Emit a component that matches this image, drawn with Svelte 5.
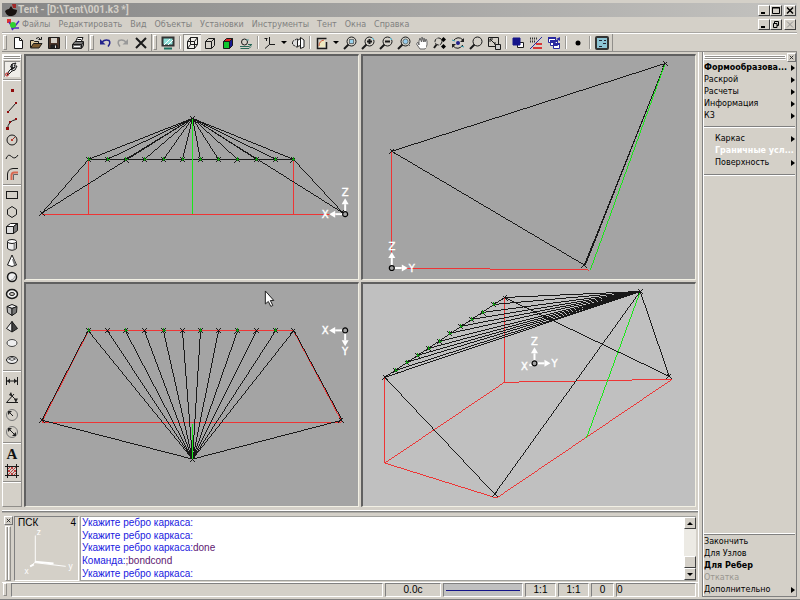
<script>
  const menus = ['Файлы', 'Редактировать', 'Вид', 'Объекты', 'Установки', 'Инструменты', 'Тент', 'Окна', 'Справка'];

  const lens = '<path d="M6.5 9.5L2 14" stroke-width="2"/><circle cx="9.5" cy="6.5" r="4.5"/>';

  // 16x16 icon bodies, drawn with a 1px black stroke by default
  const icons = {
    new: '<path d="M4.500 2.500H9.500L12.500 5.500V13.500H4.500Z" fill="#fff"/><path d="M9.500 2.500V5.500H12.500"/>',
    open: '<path d="M2.500 12.500V5.500H5.500L6.500 6.500H10.500V8.500" fill="#ddc9a0"/><path d="M2.500 13L5.500 8.500H14L11 13Z" fill="#7a5a30"/><path d="M8 3.500Q11 1 12.500 4.500M10.500 4.500H13.500V2"/>',
    save: '<path d="M2.500 2.500H13.500V13.500H2.500Z" fill="#4a3428"/><path d="M5 3H11V8H5Z" fill="#d4d0c8" stroke="none"/><path d="M5 10H11V13H5Z" fill="#222"/><path d="M9.500 10.500V13" stroke="#ddd"/>',
    print: '<path d="M5.500 7L7.500 2.500H13L11 7" fill="#fff"/><path d="M2.500 9.500L5 6.500H13.500V10.500L11.500 13.500H2.500Z" fill="#777"/><path d="M2.500 9.500H11.500V13M11.500 9.500L13.500 7M7.500 4.500H11" /><path d="M4 11.500H10" stroke="#fff"/>',
    undo: '<path d="M5 7Q8 4 12 5.500Q14 8 11 11.500" stroke="#22228c" stroke-width="1.500"/><path d="M3 4V9.500H8.500Z" fill="#22228c" stroke="none"/>',
    redo: '<path d="M11 7Q8 4 4 5.500Q2 8 5 11.500" stroke="#999" stroke-width="1.500"/><path d="M13 4V9.500H7.500Z" fill="#999" stroke="none"/>',
    del: '<path d="M3 3L13 13M13 3L3 13" stroke-width="2"/>',
    screen: '<path d="M2.500 2.500H13.500V10.500H2.500Z" fill="#8fe0d8" stroke-width="2" stroke="#333"/><path d="M4 10L10 4M8 10L13 5" stroke="#fff"/><path d="M4 13.500H12" stroke="#187060" stroke-width="2"/>',
    wire: '<path d="M3.500 6.500H10.500V13.500H3.500ZM3.500 6.500L6.500 2.500H13.500L10.500 6.500M13.500 2.500V9.500L10.500 13.500M6.500 2.500V9.500H13.500M6.500 9.500L3.500 13.500"/>',
    cube: '<path d="M3.500 6.500H9.500V13.500H3.500Z M3.500 6.500L6.500 3.500H12.500L9.500 6.500M12.500 3.500V10.500L9.500 13.500"/>',
    color: '<path d="M3.500 6.500L6.500 3.500H12.500L9.500 6.500Z" fill="#e02020"/><path d="M3.500 6.500H9.500V13.500H3.500Z" fill="#10c830"/><path d="M12.500 3.500V10.500L9.500 13.500V6.500Z" fill="#181890"/>',
    teapot: '<circle cx="6.500" cy="7" r="3"/><path d="M2 11.500H11L14 9.500H10M2.500 13.500H11L13 11.500" stroke="#286858"/><path d="M8 5H11" stroke="#58a0a0"/>',
    axes: '<path d="M2.500 3.500H5.500M7.500 2V9.500H13M7.500 9.500L3 13.500"/><path d="M4.500 3.500V6" />',
    mirror: '<path d="M2.500 6.500L7.500 3.500V12.500L2.500 9.500Z" fill="#ddd" stroke-dasharray="2 1"/><path d="M7.500 5.500L10.500 3.500V2.500L14 5V12L10.500 13.500V10.500L7.500 11.500Z" fill="#fff"/><path d="M10.500 3V13"/>',
    view: '<path d="M12.500 3.500H3.500V13.500H12.500V7" stroke-width="1.500"/><path d="M5 12V8Q7 5 11 5V12Z" fill="#eee8c0" stroke="none"/><path d="M5 11Q5 6 10 5" stroke="#d06040"/>',
    zoomWin: lens + '<path d="M7.500 4.500H11.500V8.500H7.500Z" fill="#9cd4ee" stroke-dasharray="1 1"/>',
    zoomIn: lens + '<path d="M9.500 4V9M7 6.500H12" stroke-width="2"/><path d="M12 3L14 5" stroke="#4bd"/>',
    zoomOut: lens + '<path d="M7 6.500H12" stroke-width="2"/><path d="M12 3L14 5" stroke="#4bd"/>',
    zoomAll: lens + '<circle cx="9.500" cy="6.500" r="2.500" fill="#9ce" stroke="#677"/><path d="M12 9L14 11" stroke="#666"/>',
    hand: '<path d="M4 7L5 10V6L6 3L7.500 7L8 2L9.500 7L10 3L11 7L12 4L13 6V10L11 14H6L2.500 9Z" fill="#fff" stroke="#666"/><path d="M5 10H12V13H7Z" fill="#fff" stroke="none"/>',
    zoomDyn: '<circle cx="6.500" cy="6.500" r="3.500" stroke-dasharray="4 1"/><path d="M4.500 9.500L2 13" stroke-width="2"/><path d="M11.500 2L14 4.500L11.500 7L9 4.500ZM11.500 9L14 11.500L11.500 14L9 11.500Z" fill="#000" stroke="none"/>',
    orbit: '<path d="M3 6Q8 0 13 5M13 10Q8 16 3 11"/><path d="M14 3V7H10ZM2 13V9H6Z" fill="#222" stroke="none"/><path d="M2 5L5 6M11 11L14 12" stroke="#39a"/><circle cx="8" cy="8" r="2" fill="#22228c" stroke="none"/>',
    zoom: lens,
    fit: '<path d="M2.500 2.500H12.500V11.500H2.500Z"/><path d="M4 4L10 10M4 7V4H7M9 7V10"/><path d="M9.500 9.500H14.500V14.500H9.500Z" fill="#ccc"/>',
    layers: '<path d="M7.500 7.500H13.500V12.500H7.500Z" fill="#fff"/><path d="M3 3H10V10H3Z" fill="#14148a" stroke="#14148a"/>',
    hatching: '<path d="M2 3.500H9M2 6.500H8" stroke-dasharray="1 1" stroke-width="2" stroke="#333"/><path d="M8 8H14V10H8ZM5 12H14V14H5Z" fill="#d83838" stroke="none"/><path d="M2 14L14 2" stroke="#2828a0"/>',
    cascade: '<path d="M2.500 2.500H9.500V7.500H2.500ZM4.500 5.500H11.500V10.500H4.500ZM7.500 8.500H13.500V13.500H7.500Z" fill="#fff" stroke="#2828a0"/><path d="M2 3H10M4 6H12M7 9H14" stroke="#2828a0" stroke-width="2"/><path d="M10 4L14 2V6Z" fill="#2828a0" stroke="none"/>',
    dot: '<circle cx="8" cy="8" r="2.500" fill="#000" stroke="none"/>',
    panel: '<rect x="2" y="2" width="12" height="12" rx="1" fill="#8cc4d4" stroke="#333" stroke-width="2"/><path d="M5 5.500H8M9 8.500H12M5 11.500H8M10 5.500H12" stroke="#223"/>',
    tool: '<path d="M3 14L5 10L8 7L6.500 6L8 3L12 2L10 5H13L11 9L8 10L5 13Z" fill="#eee"/><path d="M8 3V7H10M7 9L11 6" stroke-width="1.500"/><circle cx="3" cy="13.500" r="1.500" stroke="#c02020"/>',
    point: '<rect x="7" y="7" width="3" height="3" fill="#900c0c" stroke="none"/>',
    line: '<path d="M4 13L12 4"/><path d="M3 12H5V14H3ZM11 3H13V5H11Z" fill="#900c0c" stroke="none"/>',
    arc: '<path d="M3.500 13Q4 5 12 3.500"/><path d="M2 11H5V14H2ZM5 5H7V7H5ZM11 2H13V4H11Z" fill="#900c0c" stroke="none"/>',
    circle: '<circle cx="8" cy="8" r="5"/><path d="M8 8L11 5" stroke="#a03020"/><path d="M7 7H9V9H7Z" fill="#c04030" stroke="none"/>',
    curve: '<path d="M2 10Q4 4 7.500 7.500T14 6"/>',
    fillet: '<path d="M3.500 14V8Q4 3 9 2.500H14"/><path d="M7.500 14V9Q8 6.500 10 6.500H14" stroke="#d86850" stroke-width="2"/><path d="M9.500 14V8.500H14" stroke="#666"/>',
    rect: '<rect x="2.500" y="4.500" width="11" height="7"/>',
    hex: '<path d="M8 2.500L12.500 5.500V10.500L8 13.500L3.500 10.500V5.500Z"/>',
    box: '<path d="M2.500 6.500L6.500 3.500H13.500L9.500 6.500Z" fill="#fff"/><path d="M2.500 6.500H9.500V13.500H2.500Z" fill="#ddd"/><path d="M13.500 3.500V10.500L9.500 13.500V6.500Z" fill="#777"/>',
    cylinder: '<path d="M3.500 4.500V11.500Q8 15 12.500 11.500V4.500" fill="#eee"/><ellipse cx="8" cy="4.500" rx="4.500" ry="2" fill="#fff"/><path d="M10.500 7V12" stroke="#888" stroke-width="2"/>',
    cone: '<path d="M8 2L12.500 12Q8 15 3.500 12Z" fill="#fff"/><path d="M9 6L11 12" stroke="#777" stroke-width="2"/>',
    sphere: '<circle cx="8" cy="8" r="4.500" fill="#eee" stroke-width="1.500"/><path d="M7 11Q10 11 11 7" stroke="#999"/>',
    torus: '<ellipse cx="8" cy="8" rx="5.500" ry="4.500" fill="#eee" stroke-width="1.500"/><ellipse cx="8" cy="8" rx="2.500" ry="1.500" fill="#d4d0c8"/>',
    prism: '<path d="M3 4.500L8 2.500L13 4.500L8 6.500Z" fill="#eee"/><path d="M3 4.500L8 6.500V13.500L3.500 10.500Z" fill="#bbb"/><path d="M13 4.500L8 6.500V13.500L12.500 10.500Z" fill="#777"/>',
    pyramid: '<path d="M8 2.500L2.500 9.500L8 13Z" fill="#eee"/><path d="M8 2.500L13.500 9.500L8 13Z" fill="#444"/>',
    ellipsoid: '<ellipse cx="8" cy="8" rx="5" ry="3.500" fill="#eee" stroke="#444"/>',
    ring: '<ellipse cx="8" cy="8" rx="5.500" ry="3.500" fill="#eee"/><path d="M4.500 7Q8 10 11.500 7Q8 4 4.500 7" stroke="#555"/>',
    dimLine: '<path d="M2.500 4V12M13.500 4V12M3 8H13" /><path d="M3 8L6 5.500V10.500ZM13 8L10 5.500V10.500Z" fill="#222" stroke="none"/>',
    dimAngle: '<path d="M14 12.500H2.500L10 4M8 6Q11 8 12 12" /><path d="M7 2L9 7L5 5ZM10 8.500H14L12 12Z" fill="#222" stroke="none"/>',
    dimRadius: '<circle cx="8" cy="8" r="5.500" stroke="#777"/><path d="M5 5L9 9"/><path d="M4 4H8L4 8Z" fill="#222" stroke="none"/>',
    dimDiam: '<circle cx="8" cy="8" r="5.500" stroke="#777"/><path d="M5 5L11 11"/><path d="M4 4H8L4 8ZM12 12H8L12 8Z" fill="#222" stroke="none"/>',
    text: '<text x="8" y="13" text-anchor="middle" font-family="Liberation Serif, serif" font-size="15" font-weight="bold" fill="#111" stroke="none">A</text>',
    hatch: '<path d="M3.500 1V15M12.500 1V15M1 3.500H15M1 12.500H15"/><path d="M4 6L6 4M4 9L9 4M4 12L12 4M7 12L12 7M10 12L12 10M4 7L9 12M7 4L12 9" stroke="#c04040"/>'
  };

  const toolbars = [
    [['new', 'open', 'save'], ['print']],
    [['undo', 'redo', 'del']],
    [
      ['screen'],
      ['wire', 'cube', 'color', 'teapot'],
      ['axes', 'more', 'mirror'],
      ['view', 'more', 'zoomWin', 'zoomIn', 'zoomOut', 'zoomAll', 'hand', 'zoomDyn', 'orbit', 'zoom', 'fit'],
      ['layers', 'hatching', 'cascade'],
      ['dot'],
      ['panel']
    ]
  ];

  const tools = [
    { name: 'mode', items: ['tool'] },
    { name: 'curves', items: ['point', 'line', 'arc', 'circle', 'curve', 'fillet'] },
    { name: 'solids', items: ['rect', 'hex', 'box', 'cylinder', 'cone', 'sphere', 'torus', 'prism', 'pyramid', 'ellipsoid', 'ring'] },
    { name: 'dims', items: ['dimLine', 'dimAngle', 'dimRadius', 'dimDiam'] },
    { name: 'notes', items: ['text', 'hatch'] }
  ];

  const nodesX = [88, 107, 125, 144, 163, 182, 200, 218, 237, 256, 275, 293];
  const skew = nodesX.map((_, i) => [384 + Math.round((i * 120) / 11), 377 - Math.round((i * 80) / 11)]);

  // lines are [x1, y1, x2, y2]; marks are small crosses on the nodes
  const views = [
    {
      name: 'Спереди',
      box: '26 56 332 223',
      red: [[88, 159, 88, 214], [293, 159, 293, 214], [41, 214, 343, 214]],
      black: [
        ...nodesX.map((x) => [192, 118, x, 159]),
        [88, 159, 293, 159], [192, 118, 41, 213], [192, 118, 343, 213], [88, 159, 41, 213], [293, 159, 343, 213]
      ],
      green: [[192, 118, 192, 214]],
      marks: [[192, 118], [41, 213], [342, 212]],
      dots: nodesX.map((x) => [x, 159]),
      origin: [345, 214],
      axes: [['Z', 0, -1], ['X', -1, 0]]
    },
    {
      name: 'Сбоку',
      box: '363 56 332 223',
      red: [[391, 151, 391, 268], [391, 268, 589, 270]],
      black: [[391, 151, 665, 63], [391, 151, 584, 265], [665, 63, 584, 265], [664, 65, 585, 265]],
      green: [[665, 63, 590, 270]],
      marks: [[391, 151], [665, 63], [584, 265]],
      dots: [],
      origin: [391, 268],
      axes: [['Z', 0, -1], ['Y', 1, 0]]
    },
    {
      name: 'Сверху',
      box: '26 284 332 223',
      red: [[88, 330, 293, 330], [88, 330, 41, 422], [293, 330, 342, 422], [41, 422, 341, 422]],
      black: [
        ...nodesX.map((x) => [192, 459, x, 331]),
        [87, 331, 41, 420], [294, 331, 342, 420], [41, 420, 192, 459], [342, 420, 192, 459]
      ],
      green: [[192, 424, 192, 459]],
      marks: [...nodesX.filter((_, i) => i % 2).map((x) => [x, 330]), [41, 420], [341, 420], [192, 459]],
      dots: nodesX.filter((_, i) => i % 2 === 0).map((x) => [x, 330]),
      origin: [345, 330],
      axes: [['X', -1, 0], ['Y', 0, 1]],
      cursor: [265, 291]
    },
    {
      name: 'Аксонометрия',
      box: '363 284 332 223',
      active: true,
      red: [[384, 377, 384, 463], [384, 463, 504, 382], [504, 382, 504, 297], [504, 382, 672, 379], [672, 379, 496, 498], [496, 498, 384, 463]],
      black: [
        ...skew.map(([x, y]) => [640, 291, x, y]),
        [384, 377, 504, 297], [504, 297, 669, 376], [640, 291, 669, 376], [640, 291, 494, 494], [384, 377, 494, 494]
      ],
      green: [[640, 291, 586, 438]],
      marks: [[640, 291], [669, 376], [494, 494], [384, 377], [504, 297]],
      dots: skew.slice(1, -1),
      origin: [534, 363],
      axes: [['Z', 0, -1], ['Y', 1, 0], ['X', -0.5, 0.2]]
    }
  ];

  function arrow(dx, dy) {
    const len = Math.hypot(dx, dy);
    const [ux, uy] = [dx / len, dy / len];
    const k = len < 1 ? 6 : 16;
    const [bx, by] = [ux * (k - 6), uy * (k - 6)];
    return `M${ux * k} ${uy * k}L${bx - uy * 3.5} ${by + ux * 3.5}L${bx + uy * 3.5} ${by - ux * 3.5}Z`;
  }

  const labelPos = { Z: [0, -18], X: [-20, 4], Y: [20, 4] };

  function label(name, dx, dy) {
    if (name === 'Y' && dy) return [0, 25];
    if (name === 'X' && dy) return [-10, 7];
    return labelPos[name];
  }

  const sections = ['Формообразова...', 'Раскрой', 'Расчеты', 'Информация', 'К3'];
  const parts = ['Каркас', 'Граничные усл...', 'Поверхность'];
  const actions = ['Закончить', 'Для Узлов', 'Для Ребер', 'Откатка', 'Дополнительно'];

  const log = [
    ['Укажите ребро каркаса:', ''],
    ['Укажите ребро каркаса:', ''],
    ['Укажите ребро каркаса:', 'done'],
    ['Команда:', ';bondcond'],
    ['Укажите ребро каркаса:', '']
  ];

  let section = 'Формообразова...';
  let part = 'Граничные усл...';
  let action = 'Для Ребер';
  let shading = 'wire';
</script>

<div class="window">
  <header class="title">
    <svg class="app-icon" viewBox="0 0 14 14">
      <path d="M1 8Q3 6 5 6L7 3L9 6L13 7Q13 12 8 13H5Q2 12 1 8Z" fill="#181210" />
      <path d="M8 1H12V5H9Z" fill="#a02828" />
    </svg>
    <h1>Tent - [D:\Tent\001.k3 *]</h1>
    <div class="sysbuttons">
      <button aria-label="Свернуть"><svg viewBox="0 0 10 9"><path d="M2 7H6" stroke-width="2" /></svg></button>
      <button aria-label="Развернуть"><svg viewBox="0 0 10 9"><path d="M1.500 1.500H8.500V7.500H1.500ZM1 2H9" /></svg></button>
      <button class="apart" aria-label="Закрыть"><svg viewBox="0 0 10 9"><path d="M2 1.500L8 7.500M8 1.500L2 7.500" stroke-width="1.500" /></svg></button>
    </div>
  </header>

  <nav class="menu">
    <svg class="doc-icon" viewBox="0 0 14 14">
      <path d="M1 1H5V5H1Z" fill="#e03030" />
      <path d="M3 4L7 10M13 3L6 12M5 10H13" stroke="#5028c0" stroke-width="1.500" />
      <circle cx="7" cy="7" r="3" fill="#30d030" />
    </svg>
    {#each menus as item}
      <button>{item}</button>
    {/each}
    <div class="sysbuttons">
      <button aria-label="Свернуть окно"><svg viewBox="0 0 10 9"><path d="M2 7H6" stroke-width="2" /></svg></button>
      <button aria-label="Восстановить окно"><svg viewBox="0 0 10 9"><path d="M3.500 3V1.500H7.500V5.500H6M2.500 3.500H6V7.500H2.500Z" /></svg></button>
      <button class="apart off" aria-label="Закрыть окно"><svg viewBox="0 0 10 9"><path d="M2 1.500L8 7.500M8 1.500L2 7.500" /></svg></button>
    </div>
  </nav>

  <div class="toolbar">
    {#each toolbars as bar}
      <div class="bar">
        <span class="grip"></span>
        {#each bar as group, i}
          {#if i > 0}<span class="sep"></span>{/if}
          {#each group as id}
            {#if id === 'more'}
              <button class="more" aria-label="Ещё"><span class="tri down"></span></button>
            {:else}
              <button
                class="tool"
                class:pressed={shading === id}
                aria-label={id}
                on:click={() => { if (group.includes('wire')) shading = id; }}
              >
                <svg class="icon" viewBox="0 0 16 16">{@html icons[id]}</svg>
              </button>
            {/if}
          {/each}
        {/each}
      </div>
    {/each}
  </div>

  <div class="body">
    <div class="left">
      <div class="work">
        <aside class="tools">
          <span class="hgrip"></span>
          {#each tools as group}
            <div class="group {group.name}">
              {#each group.items as id}
                <button class="tool" class:pressed={id === 'tool'} aria-label={id}>
                  <svg class="icon" viewBox="0 0 16 16">{@html icons[id]}</svg>
                </button>
              {/each}
            </div>
          {/each}
        </aside>

        <main class="views">
          {#each views as v}
            <section class="view" class:active={v.active} aria-label={v.name}>
              <svg viewBox={v.box}>
                <g transform="translate(.5 .5)" shape-rendering="crispEdges">
                  {#each v.red as [x1, y1, x2, y2]}
                    <line class="red" {x1} {y1} {x2} {y2} />
                  {/each}
                  {#each v.black as [x1, y1, x2, y2]}
                    <line class="black" {x1} {y1} {x2} {y2} />
                  {/each}
                  {#each v.green as [x1, y1, x2, y2]}
                    <line class="green" {x1} {y1} {x2} {y2} />
                  {/each}
                  {#each [...v.marks, ...v.dots] as [x, y]}
                    <path class="black" d="M{x - 2} {y - 2}l5 5M{x + 2} {y - 2}l-5 5" />
                  {/each}
                  {#each v.dots as [x, y]}
                    <path class="node" d="M{x} {y - 2}v4M{x - 1} {y}h3" />
                  {/each}
                </g>
                <g class="axes" transform="translate({v.origin[0] + 0.5} {v.origin[1] + 0.5})">
                  {#each v.axes as [name, dx, dy]}
                    <line x1="0" y1="0" x2={dx * 10} y2={dy * 10} />
                    <path d={arrow(dx, dy)} />
                    <text x={label(name, dx, dy)[0]} y={label(name, dx, dy)[1]}>{name}</text>
                  {/each}
                  <circle r="2.500" />
                </g>
                {#if v.cursor}
                  <path
                    class="cursor"
                    transform="translate({v.cursor[0]} {v.cursor[1]})"
                    d="M.5 0V13L3.500 10.500L6 15.500L8 14.500L5.500 9.500H9Z"
                  />
                {/if}
              </svg>
            </section>
          {/each}
        </main>
      </div>

      <div class="console">
        <div class="handle">
          <button class="close" aria-label="Закрыть панель"><svg viewBox="0 0 8 8"><path d="M2 2L6 6M6 2L2 6" /></svg></button>
          <span class="vgrip"></span>
        </div>
        <div class="ucs">
          <div class="ucs-head"><span>ПСК</span><span>4</span></div>
          <svg viewBox="0 0 62 48">
            <path d="M18.500 8V37M18 37L51 41M18 37L13 41" />
            <path d="M18 36L38 38M13 41L17 39" stroke-width="2" />
            <text x="20" y="7">z</text>
            <text x="7" y="49">x</text>
            <text x="54" y="44">y</text>
          </svg>
        </div>
        <div class="log">
          {#each log as [prompt, reply]}
            <p>{prompt}<span>{reply}</span></p>
          {/each}
        </div>
        <div class="scroll">
          <button aria-label="Вверх"><span class="tri up"></span></button>
          <span class="track"></span>
          <span class="thumb"></span>
          <button aria-label="Вниз"><span class="tri down"></span></button>
        </div>
      </div>

      <footer class="status">
        <span class="grip"></span>
        <span class="cell hint"></span>
        <span class="cell time">0.0с</span>
        <span class="cell pen"><i></i></span>
        <span class="cell scale">1:1</span>
        <span class="cell scale">1:1</span>
        <span class="cell count">0</span>
        <span class="cell last">0</span>
      </footer>
    </div>

    <aside class="side">
      <div class="side-head">
        <span class="hgrip"></span>
        <button class="close" aria-label="Закрыть меню"><svg viewBox="0 0 8 8"><path d="M2 2L6 6M6 2L2 6" /></svg></button>
      </div>
      <div class="list">
        {#each sections as item}
          <button class:bold={item === section} on:click={() => (section = item)}>
            {item}<span class="tri right"></span>
          </button>
        {/each}
      </div>
      <div class="list nested">
        {#each parts as item}
          <button class:chosen={item === part} on:click={() => (part = item)}>
            {item}{#if item !== part}<span class="tri right"></span>{/if}
          </button>
        {/each}
      </div>
      <div class="list actions">
        {#each actions as item}
          <button class:bold={item === action} disabled={item === 'Откатка'} on:click={() => (action = item)}>
            {item}{#if item === 'Дополнительно'}<span class="tri right"></span>{/if}
          </button>
        {/each}
      </div>
    </aside>
  </div>
</div>

<style>
  :global(body) {
    background: #d4d0c8;
  }

  .window {
    display: flex;
    flex-direction: column;
    min-height: 100vh;
    box-sizing: border-box;
    padding: 3px 3px 2px 2px;
    background: #d4d0c8;
    border-bottom: 1px solid #808080;
    font-family: "DejaVu Sans", sans-serif;
    font-size: 8px;
    color: #000;
  }

  button {
    font: inherit;
    color: inherit;
    background: none;
    border: none;
    padding: 0;
    margin: 0;
  }

  svg {
    display: block;
    fill: none;
  }

  .title {
    display: flex;
    align-items: center;
    height: 14px;
    padding: 0 1px 0 2px;
    background: linear-gradient(90deg, #868686, #c4c3c0);
    color: #d4d0c8;
  }

  .app-icon,
  .doc-icon {
    width: 14px;
    height: 14px;
  }

  h1 {
    margin: 0;
    flex: 1;
    font-family: Roboto, sans-serif;
    font-size: 10px;
    line-height: 14px;
    font-weight: bold;
  }

  .sysbuttons {
    display: flex;
    margin-left: auto;
  }

  .sysbuttons button {
    width: 12px;
    height: 11px;
    background: #d4d0c8;
    border: 1px solid;
    border-color: #fff #404040 #404040 #fff;
    box-sizing: border-box;
  }

  .sysbuttons .apart {
    margin-left: 2px;
  }

  .sysbuttons svg {
    width: 10px;
    height: 9px;
    stroke: #000;
  }

  .sysbuttons .off svg {
    stroke: #909090;
  }

  .menu {
    display: flex;
    align-items: center;
    gap: 8px;
    height: 16px;
    padding: 0 1px 0 4px;
    color: #808080;
    border-bottom: 1px solid #a8a6a2;
    box-sizing: border-box;
  }

  .doc-icon {
    margin-right: -6px;
  }

  .toolbar {
    display: flex;
    height: 19px;
    box-sizing: border-box;
    border-top: 1px solid #fff;
    border-bottom: 1px solid #908e8a;
  }

  .bar {
    display: flex;
    align-items: center;
    padding-right: 1px;
    border-right: 1px solid #908e8a;
  }

  .grip {
    width: 4px;
    height: 15px;
    margin: 0 2px 0 1px;
    border: 1px solid;
    border-color: #fff #908e8a #908e8a #fff;
    box-sizing: border-box;
    flex: none;
  }

  .sep {
    width: 1px;
    height: 13px;
    margin: 0 2px;
    background: #9a9894;
    border-right: 1px solid #fff;
  }

  .bar .tool {
    width: 18px;
    height: 17px;
    display: grid;
    place-items: center;
  }

  .icon {
    width: 16px;
    height: 16px;
    stroke: #1a1a1a;
  }

  .tool.pressed {
    background: #efede8;
    box-shadow: inset 1px 1px #908e8a;
  }

  .more {
    width: 10px;
    display: grid;
    place-items: center;
  }

  .tri {
    border: 3px solid transparent;
    flex: none;
  }

  .tri.down {
    border-top-color: #000;
    border-bottom: none;
  }

  .tri.up {
    border-bottom-color: #000;
    border-top: none;
  }

  .tri.right {
    border-left: 4px solid #000;
    border-right: none;
  }

  .body {
    flex: 1;
    display: grid;
    grid-template-columns: 1fr 98px;
  }

  .left {
    display: flex;
    flex-direction: column;
    min-width: 0;
    border-right: 1px solid #fff;
  }

  .work {
    flex: 1;
    display: grid;
    grid-template-columns: 20px 1fr;
    gap: 2px;
    padding: 2px 2px 3px 0;
    border-bottom: 1px solid #fff;
  }

  .tools {
    display: flex;
    flex-direction: column;
    border: 1px solid;
    border-color: #fff #908e8a #908e8a #fff;
    box-sizing: border-box;
  }

  .hgrip {
    height: 4px;
    border: 1px solid;
    border-color: #fff #fff #908e8a #fff;
    box-shadow: 0 1px #fff, inset 0 -1px #fff, inset 0 1px #908e8a;
    box-sizing: border-box;
  }

  .group {
    display: grid;
    grid-auto-rows: 1fr;
    padding: 2px 1px;
    border-bottom: 1px solid #908e8a;
    box-shadow: 0 1px #fff;
  }

  .group .tool {
    display: grid;
    place-items: center;
    height: 100%;
  }

  .mode {
    height: 16px;
  }

  .curves {
    height: 100px;
  }

  .solids {
    height: 181px;
  }

  .dims {
    height: 67px;
  }

  .notes {
    height: 34px;
  }

  .views {
    display: grid;
    grid-template: 1fr 1fr / 1fr 1fr;
    gap: 2px;
  }

  .view {
    position: relative;
    background: #a4a4a4;
    border-style: solid;
    border-width: 2px 1px 1px 2px;
    border-color: #606060 #f2f0e4 #f2f0e4 #606060;
    min-height: 0;
    min-width: 0;
  }

  .view.active {
    background: #c0c0c0;
  }

  .view > svg {
    position: absolute;
    width: 100%;
    height: 100%;
  }

  .red {
    stroke: #ee3434;
  }

  .black {
    stroke: #181818;
  }

  .green {
    stroke: #18e818;
  }

  .node {
    stroke: #10a010;
  }

  .axes line {
    stroke: #fff;
    stroke-width: 2;
  }

  .axes path {
    fill: #fff;
  }

  .axes text {
    fill: #fff;
    font: 10px "DejaVu Sans", sans-serif;
    text-anchor: middle;
    stroke: #fff;
    stroke-width: 0.4;
  }

  .axes circle {
    fill: #a4a4a4;
    stroke: #000;
    stroke-width: 1.2;
  }

  .cursor {
    fill: #fff;
    stroke: #202020;
  }

  .console {
    display: flex;
    height: 71px;
    box-sizing: border-box;
    padding: 4px 2px 1px 1px;
    border-top: 1px solid #808080;
    box-shadow: inset 0 1px #b0aea8;
  }

  .handle {
    display: flex;
    flex-direction: column;
    align-items: center;
    width: 10px;
    gap: 1px;
  }

  .close {
    width: 9px;
    height: 9px;
    border: 1px solid;
    border-color: #fff #707070 #707070 #fff;
    box-sizing: border-box;
    flex: none;
  }

  .close svg {
    width: 7px;
    height: 7px;
    stroke: #202020;
  }

  .vgrip {
    flex: 1;
    width: 6px;
    border: 1px solid;
    border-color: #fff #908e8a #908e8a #fff;
    box-sizing: border-box;
    background: linear-gradient(90deg, #d4d0c8 1px, #908e8a 1px, #908e8a 2px, #fff 2px, #fff 3px, #d4d0c8 3px);
  }

  .ucs {
    width: 65px;
    box-sizing: border-box;
    margin-left: 1px;
    padding: 0 2px 0 3px;
    border: 1px solid;
    border-color: #808080 #fff #fff #808080;
  }

  .ucs-head {
    display: flex;
    justify-content: space-between;
    font: 10px/11px "Liberation Sans", sans-serif;
  }

  .ucs svg {
    width: 100%;
    overflow: visible;
    stroke: #fff;
  }

  .ucs text {
    fill: #fff;
    stroke: none;
    font: 9px "Liberation Sans", sans-serif;
  }

  .log {
    flex: 1;
    display: grid;
    grid-auto-rows: 1fr;
    align-items: center;
    padding-left: 1px;
    margin-left: 1px;
    background: #fff;
    border: 1px solid #a0a09c;
    border-right: none;
    font: 10px/12px "Liberation Sans", sans-serif;
    color: #2020e0;
  }

  .log p {
    margin: 0;
  }

  .log span {
    color: #602070;
  }

  .scroll {
    display: flex;
    flex-direction: column;
    width: 12px;
    border: 1px solid #a0a09c;
    border-width: 1px 0;
    background: #eceae4;
  }

  .scroll button,
  .thumb {
    display: grid;
    place-items: center;
    height: 12px;
    background: #d4d0c8;
    border: 1px solid;
    border-color: #fff #404040 #404040 #fff;
    box-sizing: border-box;
  }

  .track {
    flex: 1;
  }

  .status {
    display: flex;
    gap: 2px;
    height: 15px;
    padding-right: 2px;
    border-top: 1px solid #fff;
    box-sizing: border-box;
    font: 10px/12px "Liberation Sans", sans-serif;
    text-align: center;
  }

  .status .grip {
    height: 13px;
  }

  .cell {
    border: 1px solid;
    border-color: #808080 #fff #fff #808080;
    box-sizing: border-box;
  }

  .hint {
    flex: 1;
  }

  .time {
    width: 56px;
  }

  .pen {
    display: grid;
    align-items: center;
    width: 80px;
    padding: 0 2px;
    background: #c0c0c0;
  }

  .pen i {
    height: 1px;
    background: #14148a;
  }

  .scale {
    width: 31px;
  }

  .count {
    width: 23px;
  }

  .last {
    width: 80px;
    text-align: left;
  }

  .side {
    display: flex;
    flex-direction: column;
    margin-left: 3px;
    border: 1px solid #808080;
    border-top: none;
    box-shadow: inset 1px 0 #fff;
  }

  .side-head {
    display: flex;
    align-items: center;
    height: 10px;
  }

  .side-head .hgrip {
    flex: 1;
    margin: 0 1px;
  }

  .list {
    display: flex;
    flex-direction: column;
    margin: 0 1px;
    padding-bottom: 4px;
    border-bottom: 1px solid #808080;
    box-shadow: 0 1px #fff;
  }

  .list button {
    display: flex;
    align-items: center;
    justify-content: space-between;
    height: 12px;
    line-height: 12px;
    padding: 0;
    text-align: left;
    white-space: nowrap;
  }

  .nested {
    padding: 6px 0 5px 11px;
  }

  .list .bold,
  .list .chosen {
    font-weight: bold;
  }

  .list .chosen {
    color: #fff;
  }

  .list button:disabled {
    color: #999690;
  }

  .actions {
    margin-top: auto;
    padding: 1px 0 0;
    border-top: 1px solid #808080;
    border-bottom: none;
    box-shadow: 0 -1px #fff;
  }
</style>
